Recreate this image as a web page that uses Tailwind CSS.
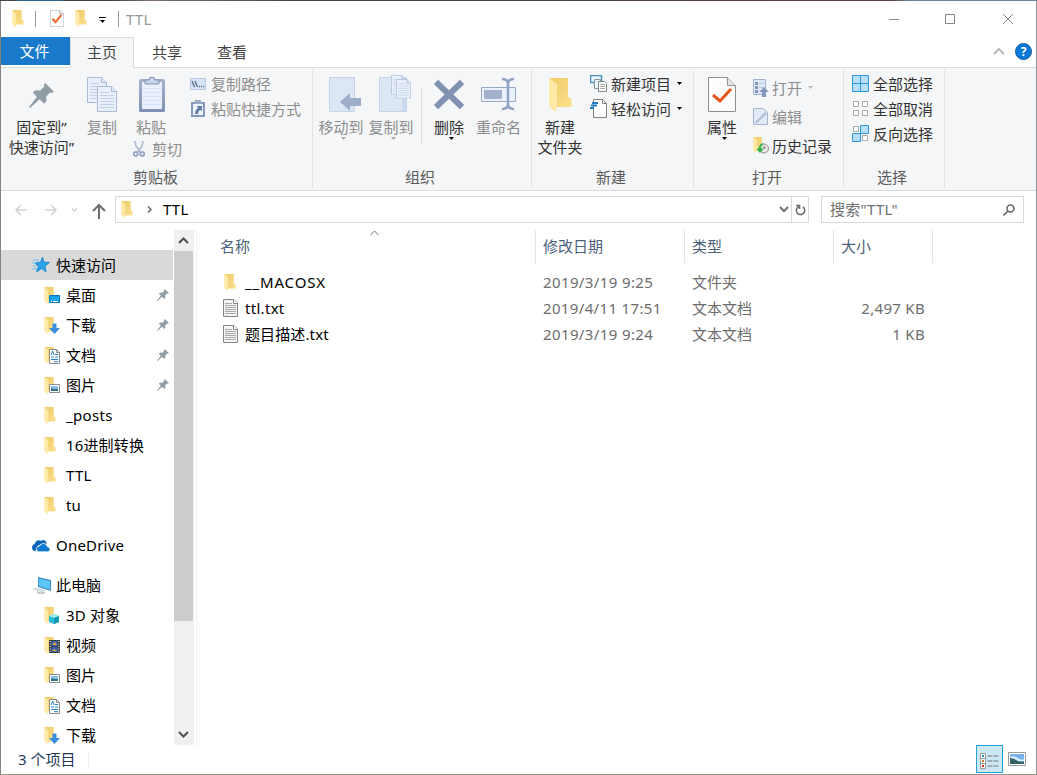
<!DOCTYPE html>
<html lang="zh-CN">
  <head>
    <meta charset="UTF-8" />
    <meta name="viewport" content="width=device-width, initial-scale=1.0" />
    <title>TTL</title>
    <script src="https://cdn.jsdelivr.net/npm/@tailwindcss/browser@4"></script>
  </head>
  <body class="font-['Noto_Sans','Noto_Sans_CJK_SC',sans-serif] text-[15px] leading-5 text-black">
    <!-- shared icons -->
    <svg class="absolute size-0">
      <linearGradient id="gold" x1="0" x2="1" y1="0" y2="1">
        <stop offset="0" stop-color="#f0cb66" />
        <stop offset="1" stop-color="#fbe08f" />
      </linearGradient>
      <linearGradient id="steel" x1="0" x2="0" y1="0" y2="1">
        <stop offset="0" stop-color="#a5b2cc" />
        <stop offset="1" stop-color="#7f90b3" />
      </linearGradient>
      <symbol id="folder" viewBox="0 0 23 34">
        <path d="M1 0h18v19l3.500 2v8H7z" fill="url(#gold)" />
        <path d="M0 0l8 6v23l-2 5-6-6z" fill="#ffe9a9" />
      </symbol>
      <symbol id="pin" viewBox="0 0 24 24">
        <path d="M15.500 0L24 8.500l-2.500 1-1.500-.3-3.500 4 .2 4.300-2.200 2.500-4.300-4.300L1 24l-1-1 7.500-9.500L3.700 9l2.500-2 4.600.3 3.700-3.600-.3-1.700z" />
      </symbol>
      <symbol id="page" viewBox="0 0 28 35">
        <path d="M.5.5h19l8 8v26H.5z" fill="#fdfdfd" stroke="#8f8f8f" />
        <path d="M19.500.5v8h8" fill="#e4e4e4" stroke="#8f8f8f" />
      </symbol>
      <symbol id="txt" viewBox="0 0 15 18">
        <path d="M.5.5h10.500l3.500 3.500v13.500H.5z" fill="#f6f6f6" stroke="#858585" />
        <path d="M10.500.5v4h4" fill="#fff" stroke="#858585" />
        <path d="M2 4.500h7M2 6.500h11M2 8.500h11M2 10.500h11M2 12.500h11M2 14.500h11" stroke="#a8a8a8" />
      </symbol>
      <symbol id="bluepage" viewBox="0 0 20 26">
        <path d="M.5.5h14l5 5v20H.5z" fill="#e9f0fb" stroke="#a9b9d6" />
        <path d="M14.500.5v5h5" fill="#dce6f5" stroke="#a9b9d6" />
        <path d="M3 6.500h9M3 9.500h14M3 12.500h14M3 15.500h14M3 18.500h14M3 21.500h14" stroke="#c3d0e6" />
      </symbol>
      <symbol id="picture" viewBox="0 0 11 9">
        <path d="M.5.5h10v8H.5z" fill="#fff" stroke="#8c8c8c" />
        <path d="M2 2h7v3H2z" fill="#86bbee" />
        <path d="M2 4l3 1 4 0v2H2z" fill="#33737d" />
      </symbol>
      <symbol id="down" viewBox="0 0 5 3"><path d="M0 0h5L2.500 3z" /></symbol>
      <symbol id="f-desktop" viewBox="0 0 17 17">
        <use href="#folder" width="12" height="17" />
        <path d="M5.500 8.500h10v7h-10z" fill="#18a2f2" stroke="#0878be" />
        <path d="M7 14.500h1M9 14.500h5" stroke="#fff" />
      </symbol>
      <symbol id="f-download" viewBox="0 0 17 17">
        <use href="#folder" width="12" height="17" />
        <path d="M8.500 6.500h4v4.500h3.500L10.500 17 5 11h3.500z" fill="#3b8ede" />
      </symbol>
      <symbol id="f-doc" viewBox="0 0 17 17">
        <use href="#folder" width="12" height="17" />
        <path d="M5.500 2.500h7l3 3v11h-10z" fill="#fff" stroke="#8b8b8b" />
        <path d="M12.500 2.500v3h3" fill="none" stroke="#8b8b8b" />
        <path d="M7 8l1.700-4 1.300 4M11 7.500h3M7 10h3M11 10h3M7 12.500h7M10 14.700h4" fill="none" stroke="#2b83c9" />
      </symbol>
      <symbol id="f-picture" viewBox="0 0 17 17">
        <use href="#folder" width="12" height="17" />
        <use href="#picture" x="5" y="7" width="11" height="9" />
      </symbol>
      <symbol id="f-3d" viewBox="0 0 17 17">
        <use href="#folder" width="12" height="17" />
        <path d="M5 9l5-2 5 2v6l-5 2-5-2z" fill="#27bcd4" />
        <path d="M5 9l5-2 5 2-5 2z" fill="#a7eaf3" />
        <path d="M10 11l5-2v6l-5 2z" fill="#1299b5" />
      </symbol>
      <symbol id="f-video" viewBox="0 0 17 17">
        <use href="#folder" width="12" height="17" />
        <path d="M5 3h11v13H5z" fill="#3c3c3c" />
        <path d="M7.500 4h6v5h-6zM7.500 10h6v5h-6z" fill="#3567b8" />
        <path d="M8 8l3-3 2 3zM8 14l2-2 3 2z" fill="#e7a13d" />
        <path d="M6.200 4v12M14.800 4v12" stroke="#fff" stroke-dasharray="1 1.500" />
      </symbol>
    </svg>

    <div class="h-[775px] w-[1037px] overflow-hidden bg-[linear-gradient(90deg,#47433f_0_15px,#2f648f_20px_60px,#3f413c_65px_110px,#80716a_150px,#3d4548_300px,#54423f_700px,#5b424a_890px,#6c8295_910px)] pt-px">
      <div class="flex h-[774px] flex-col border-r border-b border-l border-r-[#8d9396] border-b-[#99958b] border-l-[#87827a] bg-white">
        <!-- title bar -->
        <div class="flex h-9 shrink-0 items-center pb-px pl-[11px]">
          <svg class="h-[17px] w-3"><use href="#folder" /></svg>
          <div class="ml-[11px] h-4 w-px bg-[#999]"></div>
          <svg class="ml-[14px] h-[17px] w-[14px]" viewBox="0 0 28 35" preserveAspectRatio="none">
            <use href="#page" width="28" height="35" />
            <path d="M5 18l6 7 12-15" fill="none" stroke="#e8682e" stroke-width="4" />
          </svg>
          <svg class="ml-[11px] h-[17px] w-3"><use href="#folder" /></svg>
          <svg class="mt-[2px] ml-3 h-[6px] w-[7px]" viewBox="0 0 7 6"><path d="M0 0h7v1H0zM1 3h5L3.500 6z" /></svg>
          <div class="ml-3 h-4 w-px bg-[#999]"></div>
          <span class="ml-[7px] tracking-[.2px] text-[#999]">TTL</span>
          <svg class="mr-2 ml-auto h-3 w-[156px] fill-none stroke-[#888]" viewBox="0 0 156 12">
            <path d="M17 6.500h10M73.500 1.500h9v9h-9zM131 1l10 10M141 1l-10 10" />
          </svg>
        </div>

        <!-- tabs -->
        <div class="flex h-[31px] shrink-0 items-start border-b border-[#dadbdc] text-[#444]">
          <div class="h-7 w-[69px] bg-[#1979ca] pr-[2px] text-center leading-[29px] text-white">文件</div>
          <div class="h-[31px] w-[64px] border-x border-t border-[#dadbdc] bg-[#f5f6f7] text-center leading-[29px]">主页</div>
          <div class="w-[66px] text-center leading-[30px]">共享</div>
          <div class="w-[64px] text-center leading-[30px]">查看</div>
          <svg class="mt-[10px] ml-auto h-2 w-3 fill-none stroke-[#b5b5b5] stroke-[1.8]" viewBox="0 0 12 8"><path d="M1 7l5-5 5 5" /></svg>
          <div class="mt-[6px] mr-1 ml-[10px] size-[17px] rounded-full border border-[#15599b] bg-[#0779d8] text-center text-[12px] leading-[15px] font-bold text-white">?</div>
        </div>

        <!-- ribbon -->
        <div class="flex h-[123px] shrink-0 border-b border-[#dadbdc] bg-[#f5f6f7] pt-[2px] text-[#8d8d8d]">
          <div class="flex h-[118px] w-[312px] flex-col border-r border-[#e2e3e4]">
            <div class="flex h-[97px]">
              <div class="w-[82px] pt-[6px] pr-px text-center whitespace-nowrap text-[#333]">
                <div class="flex h-[41px] items-center justify-center pb-[3px]"><svg class="size-[25px] fill-[#919da5]"><use href="#pin" /></svg></div>
                <div>固定到”</div>
                <div>快速访问”</div>
              </div>
              <div class="w-[38px] pt-[6px] text-center">
                <svg class="mx-auto mb-[5px] h-9 w-[30px]" viewBox="0 0 30 36">
                  <use href="#bluepage" y="1" width="20" height="26" />
                  <use href="#bluepage" x="10" y="10" width="20" height="26" />
                </svg>
                <div>复制</div>
              </div>
              <div class="w-[62px] pt-[6px]">
                <svg class="mb-[5px] ml-[18px] h-9 w-[26px]" viewBox="0 0 26 36">
                  <rect y="3" width="26" height="33" rx="1.500" fill="url(#steel)" />
                  <path d="M3 6h20v27H3z" fill="#eaf1fc" />
                  <path d="M4 12.500h18M4 16.500h18M4 20.500h18M4 24.500h18M4 28.500h18" stroke="#d5e0f2" />
                  <path d="M6 8V4h4a3 3 0 0 1 6 0h4v4z" fill="#c6d2e5" stroke="#8192b2" />
                </svg>
                <div class="w-[60px] text-center">粘贴</div>
                <div class="mt-[2px] ml-[12px] flex items-center gap-[7px] whitespace-nowrap">
                  <svg class="h-[17px] w-3 shrink-0 fill-none stroke-[#91a2c2]" viewBox="0 0 12 17">
                    <path d="M2 0l1 5 5 7M10 0L9 5l-5 7" stroke-width="1.600" stroke="#aab9d2" />
                    <path d="M1 14a2 2 0 1 0 3.500-2A2 2 0 0 0 1 14zM11 14a2 2 0 1 1-3.500-2A2 2 0 0 1 11 14z" stroke-width="1.800" />
                  </svg>
                  <span>剪切</span>
                </div>
              </div>
              <div class="pt-px pl-[7px]">
                <div class="flex h-[25px] items-center gap-[5px]">
                  <svg class="h-3 w-4" viewBox="0 0 16 12">
                    <path d="M.5.5h15v11H.5z" fill="#d9e4f4" stroke="#b9c7e0" />
                    <path d="M2 3l2.500 6M5 3l2.500 6M9 8.500h1M11 8.500h1M13 8.500h1" stroke="#556b8e" stroke-width="1.300" />
                  </svg>
                  <span>复制路径</span>
                </div>
                <div class="flex h-[25px] items-center gap-[6px]">
                  <svg class="ml-[1px] h-[17px] w-[14px]" viewBox="0 0 14 17">
                    <path d="M0 2h14v15H0z" fill="#8698ba" />
                    <path d="M2 4h10v11H2z" fill="#edf3fc" />
                    <path d="M4 0h6v4H4z" fill="#9baac6" />
                    <path d="M5.500 6H11v5.500L9.300 9.800Q7 11 7 14H4q0-4 3.200-6.300z" fill="#637da9" />
                  </svg>
                  <span>粘贴快捷方式</span>
                </div>
              </div>
            </div>
            <div class="pr-[2px] text-center text-[#5a5a5a]">剪贴板</div>
          </div>

          <div class="flex h-[118px] w-[219px] flex-col border-r border-[#e2e3e4]">
            <div class="flex h-[97px] pl-[3px]">
              <div class="w-[50px] pt-[6px] text-center whitespace-nowrap">
                <svg class="mb-[5px] ml-[13px] h-9 w-8" viewBox="0 0 32 36">
                  <path d="M.5 1.500h25v34H.5z" fill="#dce6f5" stroke="#c6d3e8" />
                  <path d="M11 26l10-9v5h11v8H21v5z" fill="#9dadca" />
                </svg>
                <div class="-mx-2">移动到</div>
                <svg class="ml-[25px] h-[3px] w-[5px] fill-[#aaa]"><use href="#down" /></svg>
              </div>
              <div class="w-[55px] pt-[6px] whitespace-nowrap">
                <svg class="-mt-px mb-[5px] ml-[13px] h-[37px] w-8" viewBox="0 0 32 37">
                  <path d="M.5 2.500h27v34H.5z" fill="#dce6f5" stroke="#c6d3e8" />
                  <path d="M23 36V25l4-3v14z" fill="#cddaed" />
                  <use href="#bluepage" x="12" width="15" height="19.500" />
                  <use href="#bluepage" x="17" y="4" width="15" height="19.500" />
                </svg>
                <div class="w-[50px] text-center"><span class="-mx-2">复制到</span></div>
                <svg class="ml-[25px] h-[3px] w-[5px] fill-[#aaa]"><use href="#down" /></svg>
              </div>
              <div class="mt-[19px] h-[55px] w-px bg-[#dadcde]"></div>
              <div class="w-[54px] pt-[6px] text-center text-[#333]">
                <svg class="mx-auto mb-[5px] h-9 w-[30px]" viewBox="0 0 30 36">
                  <path d="M2 6l26 25M28 6L2 31" stroke="#8191b2" stroke-width="6" />
                </svg>
                <div>删除</div>
                <svg class="ml-[27px] h-[3px] w-[5px] fill-black"><use href="#down" /></svg>
              </div>
              <div class="w-[46px] pt-[6px] whitespace-nowrap">
                <svg class="mb-[5px] ml-[5px] h-9 w-[35px]" viewBox="0 0 35 36">
                  <path d="M.5 11.500h34v14H.5z" fill="#eaf1fd" stroke="#98a9c8" />
                  <path d="M3 14h18v9H3z" fill="#a2b0cb" />
                  <path d="M21 3q6 0 6 5v20q0 5-6 5M33 3q-6 0-6 5v20q0 5 6 5" fill="none" stroke="#91a2c2" stroke-width="2.500" />
                </svg>
                <div>重命名</div>
              </div>
            </div>
            <div class="pr-1 text-center text-[#5a5a5a]">组织</div>
          </div>

          <div class="flex h-[118px] w-[162px] flex-col border-r border-[#e2e3e4] text-[#333]">
            <div class="flex h-[97px]">
              <div class="w-[56px] pt-[6px] text-center">
                <svg class="mx-auto mt-[2px] mb-[5px] h-[34px] w-[23px]"><use href="#folder" /></svg>
                <div>新建</div>
                <div>文件夹</div>
              </div>
              <div class="pt-px pl-[2px]">
                <div class="flex h-[25px] items-center">
                  <svg class="h-[17px] w-[17px]" viewBox="0 0 17 17">
                    <path d="M.5.5h11v7H.5z" fill="#e9f6fd" stroke="#4a91b5" stroke-width="1.500" />
                    <path d="M4.500 4.500h6v9h-6z" fill="#eaf4fb" stroke="#8298a7" />
                    <path d="M8.500 6.500h6l2 2v8h-8z" fill="#fff" stroke="#858585" />
                    <path d="M10 9.500h5M10 11.500h5M10 13.500h5" stroke="#aaa" />
                  </svg>
                  <span class="ml-[4px]">新建项目</span>
                  <svg class="ml-[6px] h-[3px] w-[5px]"><use href="#down" /></svg>
                </div>
                <div class="flex h-[25px] items-center">
                  <svg class="h-[19px] w-[17px]" viewBox="0 0 17 19">
                    <path d="M3.500.5h9l4 4v14h-13z" fill="#fff" stroke="#808080" />
                    <path d="M12.500.5v4h4" fill="none" stroke="#808080" />
                    <path d="M2 4h6M1 6.500h6M0 9h4" stroke="#2680c0" stroke-width="1.800" />
                  </svg>
                  <span class="ml-[4px]">轻松访问</span>
                  <svg class="ml-[6px] h-[3px] w-[5px]"><use href="#down" /></svg>
                </div>
              </div>
            </div>
            <div class="pr-[3px] text-center text-[#5a5a5a]">新建</div>
          </div>

          <div class="flex h-[118px] w-[150px] flex-col border-r border-[#e2e3e4]">
            <div class="flex h-[97px]">
              <div class="w-[56px] pt-[6px] text-center text-[#333]">
                <svg class="mx-auto mb-[5px] h-9 w-[28px]" viewBox="0 0 28 36">
                  <use href="#page" y="1" width="28" height="35" />
                  <path d="M5 19l7 6 11-12" fill="none" stroke="#e8561c" stroke-width="3" />
                </svg>
                <div>属性</div>
                <svg class="ml-[28px] h-[3px] w-[5px] fill-black"><use href="#down" /></svg>
              </div>
              <div class="pt-[3px] pl-[3px]">
                <div class="flex h-[29px] items-center gap-[3px]">
                  <svg class="h-[18px] w-4" viewBox="0 0 16 18">
                    <path d="M.5.5h12v15H.5z" fill="#dfe8f6" stroke="#a4b4d0" />
                    <path d="M2 3h3v3H2zM2 7h3v3H2zM2 11h3v3H2z" fill="#8497ba" />
                    <path d="M6 4.500h5M6 8.500h5" stroke="#b6c4dc" />
                    <path d="M11 8l5 5h-3v5H9v-5H6z" fill="#8497ba" />
                  </svg>
                  <span>打开</span>
                  <svg class="ml-[3px] h-[3px] w-[5px] fill-[#bbb]"><use href="#down" /></svg>
                </div>
                <div class="flex h-[29px] items-center gap-[3px]">
                  <svg class="h-[17px] w-4" viewBox="0 0 16 17">
                    <path d="M.5.5h10l4 4v12H.5z" fill="#e3ebf8" stroke="#a4b4d0" />
                    <path d="M2 14L12 4l2 2L4 15H2z" fill="#b4c3dd" />
                  </svg>
                  <span>编辑</span>
                </div>
                <div class="flex h-[29px] items-center gap-[3px] text-[#333]">
                  <svg class="h-[17px] w-4" viewBox="0 0 16 17">
                    <use href="#folder" x="0" width="11" height="16" />
                    <circle cx="11" cy="11.500" r="4.500" fill="#e8e8e8" stroke="#8b8b8b" />
                    <path d="M11 9v3l2-2" fill="none" stroke="#777" />
                    <path d="M10 7q-4 1-3 6M4.500 11.500l2.500 3 2.500-3" fill="none" stroke="#30b347" stroke-width="2" />
                  </svg>
                  <span>历史记录</span>
                </div>
              </div>
            </div>
            <div class="pr-[3px] text-center text-[#5a5a5a]">打开</div>
          </div>

          <div class="flex h-[118px] w-[101px] flex-col border-r border-[#e2e3e4] text-[#333]">
            <div class="h-[97px] pt-px pl-2">
              <div class="flex h-[25px] items-center gap-[4px]">
                <svg class="size-[17px]" viewBox="0 0 17 17">
                  <path d="M.5.5h8v8h-8zM8.500.5h8v8h-8zM.5 8.500h8v8h-8zM8.500 8.500h8v8h-8z" fill="#b5dffb" stroke="#2f96dc" />
                </svg>
                <span>全部选择</span>
              </div>
              <div class="flex h-[25px] items-center gap-[4px]">
                <svg class="size-[17px]" viewBox="0 0 17 17">
                  <path d="M1.500 1.500h5v5h-5zM10.500 1.500h5v5h-5zM1.500 10.500h5v5h-5zM10.500 10.500h5v5h-5z" fill="#fff" stroke="#aaa" />
                </svg>
                <span>全部取消</span>
              </div>
              <div class="flex h-[25px] items-center gap-[4px]">
                <svg class="size-[17px]" viewBox="0 0 17 17">
                  <path d="M1.500 1.500h5v5h-5zM10.500 10.500h5v5h-5z" fill="#fff" stroke="#aaa" />
                  <path d="M8.500.5h8v8h-8zM.5 8.500h8v8h-8z" fill="#b5dffb" stroke="#2f96dc" />
                </svg>
                <span>反向选择</span>
              </div>
            </div>
            <div class="pr-1 text-center text-[#5a5a5a]">选择</div>
          </div>
        </div>

        <!-- address bar -->
        <div class="flex h-[39px] shrink-0 pt-[5px]">
          <svg class="h-[27px] w-[114px] fill-none" viewBox="0 0 114 27">
            <path d="M26 14H15M20 9l-5 5 5 5M44 14h11M50 9l5 5-5 5" stroke="#d2d2d2" stroke-width="1.500" />
            <path d="M71 12.500l2.500 2.500 2.500-2.500" stroke="#d2d2d2" stroke-width="1.500" />
            <path d="M98 23V9M92 15l6-6 6 6" stroke="#6d6d6d" stroke-width="2" />
          </svg>
          <div class="flex h-[27px] w-[694px] items-center border border-[#d9d9d9] pl-[5px]">
            <svg class="h-[17px] w-3"><use href="#folder" /></svg>
            <svg class="ml-[14px] h-[7px] w-[5px] fill-none stroke-[#666] stroke-[1.5]" viewBox="0 0 5 7"><path d="M1 .5l3 3-3 3" /></svg>
            <span class="mb-[2px] ml-[11px] tracking-[.2px]">TTL</span>
            <svg class="ml-auto h-[7px] w-[10px] fill-none stroke-[#707070] stroke-2" viewBox="0 0 10 7"><path d="M1 1l4 4 4-4" /></svg>
            <div class="ml-[2px] flex h-[25px] w-[17px] items-center justify-center border-l border-[#d9d9d9]">
              <svg class="h-3 w-[11px] fill-none stroke-[#707070] stroke-[1.6]" viewBox="0 0 11 12"><path d="M8 3a4.200 4.200 0 1 1-4.500-.3M1 1.500h3.500V5" /></svg>
            </div>
          </div>
          <div class="ml-3 flex h-[27px] w-[203px] items-center justify-between border border-[#d9d9d9] pr-2 pl-2 text-[#707070]">
            <span class="mb-[2px] tracking-[.3px]">搜索"TTL"</span>
            <svg class="size-3 fill-none stroke-[#666] stroke-[1.6]" viewBox="0 0 12 12"><circle cx="7.500" cy="4.500" r="3.500" /><path d="M5 7L.5 11.500" /></svg>
          </div>
        </div>

        <div class="flex h-[515px] shrink-0">
          <!-- navigation pane -->
          <div class="h-[515px] w-[173px] overflow-hidden pt-5">
            <div class="mr-[1px] flex h-[30px] items-center bg-[#d9d9d9] pl-[31px]">
              <svg class="h-[16px] w-[18px]" viewBox="0 0 18 16">
                <path d="M10.500 0l1.500 5 5.500.5-4.300 3.600L14 15l-4.300-3.500L4.500 15l2-5.700L3 6l5.500-.8z" fill="#27a3ec" stroke="#1683c8" stroke-width=".8" />
                <path d="M1 3h6M0 6h4M1 9h4M0 12h5" stroke="#6dc1f0" />
              </svg>
              <span class="ml-[6px]">快速访问</span>
            </div>
            <div class="flex h-[30px] items-center pr-[5px] pl-[43px]">
              <svg class="size-[17px]"><use href="#f-desktop" /></svg>
              <span class="ml-[5px]">桌面</span>
              <svg class="ml-auto size-3 fill-[#919da5]"><use href="#pin" /></svg>
            </div>
            <div class="flex h-[30px] items-center pr-[5px] pl-[43px]">
              <svg class="size-[17px]"><use href="#f-download" /></svg>
              <span class="ml-[5px]">下载</span>
              <svg class="ml-auto size-3 fill-[#919da5]"><use href="#pin" /></svg>
            </div>
            <div class="flex h-[30px] items-center pr-[5px] pl-[43px]">
              <svg class="size-[17px]"><use href="#f-doc" /></svg>
              <span class="ml-[5px]">文档</span>
              <svg class="ml-auto size-3 fill-[#919da5]"><use href="#pin" /></svg>
            </div>
            <div class="flex h-[30px] items-center pr-[5px] pl-[43px]">
              <svg class="size-[17px]"><use href="#f-picture" /></svg>
              <span class="ml-[5px]">图片</span>
              <svg class="ml-auto size-3 fill-[#919da5]"><use href="#pin" /></svg>
            </div>
            <div class="flex h-[30px] items-center pl-[43px]">
              <svg class="h-[17px] w-3"><use href="#folder" /></svg>
              <span class="ml-[10px] tracking-[.35px]">_posts</span>
            </div>
            <div class="flex h-[30px] items-center pl-[43px]">
              <svg class="h-[17px] w-3"><use href="#folder" /></svg>
              <span class="ml-[10px] tracking-[.15px]">16进制转换</span>
            </div>
            <div class="flex h-[30px] items-center pl-[43px]">
              <svg class="h-[17px] w-3"><use href="#folder" /></svg>
              <span class="ml-[10px] tracking-[.3px]">TTL</span>
            </div>
            <div class="flex h-[30px] items-center pl-[43px]">
              <svg class="h-[17px] w-3"><use href="#folder" /></svg>
              <span class="ml-[10px]">tu</span>
            </div>
            <div class="mt-[10px] flex h-[30px] items-center pl-[30px]">
              <svg class="h-[13px] w-[19px]" viewBox="0 0 18 12">
                <path d="M1 8q0-3 2.500-3.500Q4.500 1 7.500 1q1 0 2 .8Q11-.5 14 2l1 2.500-4-.5-4 2-3 5.500Q1 11 1 8z" fill="#0b65b9" />
                <path d="M5 9q.5-2.500 3-2.500Q9.500 4 12 4t3.500 3q2.500.5 2.500 2.800T15.500 12H7.500Q5 12 5 9z" fill="#0f79d0" stroke="#fff" stroke-width=".7" />
              </svg>
              <span class="ml-[6px] tracking-[.2px]">OneDrive</span>
            </div>
            <div class="mt-[10px] flex h-[30px] items-center pl-[31px]">
              <svg class="h-[17px] w-[20px]" viewBox="0 0 20 17">
                <path d="M6 0l13 3v11L6 10z" fill="#3c8dc5" />
                <path d="M7 1.500l11 2.500v8.500L7 9z" fill="#5dc5f8" />
                <path d="M0 12l4-1.500 10 3-4 2z" fill="#d5dade" />
                <path d="M5 15l3 1.500 5-1" fill="none" stroke="#b8bec4" stroke-width="1.500" />
              </svg>
              <span class="ml-[4px]">此电脑</span>
            </div>
            <div class="flex h-[30px] items-center pl-[43px]">
              <svg class="size-[17px]"><use href="#f-3d" /></svg>
              <span class="ml-[5px] tracking-[.2px]">3D 对象</span>
            </div>
            <div class="flex h-[30px] items-center pl-[43px]">
              <svg class="size-[17px]"><use href="#f-video" /></svg>
              <span class="ml-[5px]">视频</span>
            </div>
            <div class="flex h-[30px] items-center pl-[43px]">
              <svg class="size-[17px]"><use href="#f-picture" /></svg>
              <span class="ml-[5px]">图片</span>
            </div>
            <div class="flex h-[30px] items-center pl-[43px]">
              <svg class="size-[17px]"><use href="#f-doc" /></svg>
              <span class="ml-[5px]">文档</span>
            </div>
            <div class="flex h-[30px] items-center pl-[43px]">
              <svg class="size-[17px]"><use href="#f-download" /></svg>
              <span class="ml-[5px]">下载</span>
            </div>
          </div>
          <div class="flex w-5 flex-col items-start justify-between bg-[#f0f0f0]">
            <svg class="mt-[7px] ml-1 h-[7px] w-[11px] fill-none stroke-[#505050] stroke-2" viewBox="0 0 11 7"><path d="M1 6l4.500-4.500L10 6" /></svg>
            <div class="mt-[7px] h-[370px] w-[19px] bg-[#cdcdcd]"></div>
            <svg class="mt-auto mb-[7px] ml-1 h-[7px] w-[11px] fill-none stroke-[#505050] stroke-2" viewBox="0 0 11 7"><path d="M1 1l4.500 4.500L10 1" /></svg>
          </div>
          <div class="ml-[2px] w-px bg-[#f0f0f0]"></div>

          <!-- file list -->
          <div class="relative flex-1">
            <svg class="absolute top-0 left-[173px] h-[6px] w-[9px] fill-none stroke-[#707070]" viewBox="0 0 9 6"><path d="M.5 5l4-4 4 4" /></svg>
            <div class="grid h-[33px] grid-cols-[339px_149px_149px_99px] text-[#4c607a] leading-[32px]">
              <div class="border-r border-[#e5e5e5] pl-[23px]">名称</div>
              <div class="border-r border-[#e5e5e5] pl-[7px]">修改日期</div>
              <div class="border-r border-[#e5e5e5] pl-[7px]">类型</div>
              <div class="border-r border-[#e5e5e5] pl-[7px]">大小</div>
            </div>
            <div class="mt-[6px] text-[#6d6d6d]">
              <div class="grid h-[26px] grid-cols-[339px_149px_149px_91px] items-center">
                <div class="flex items-center pl-[27px] text-black"><svg class="h-[17px] w-3"><use href="#folder" /></svg><span class="ml-[9px] tracking-[.85px]">__MACOSX</span></div>
                <div class="pl-[7px] tracking-[.38px]">2019/3/19 9:25</div>
                <div class="pl-[7px]">文件夹</div>
                <div></div>
              </div>
              <div class="grid h-[26px] grid-cols-[339px_149px_149px_91px] items-center">
                <div class="flex items-center pl-[26px] text-black"><svg class="h-[18px] w-[15px]"><use href="#txt" /></svg><span class="ml-[7px] tracking-[.3px]">ttl.txt</span></div>
                <div class="pl-[7px] tracking-[.35px]">2019/4/11 17:51</div>
                <div class="pl-[7px]">文本文档</div>
                <div class="text-right tracking-[.3px]">2,497 KB</div>
              </div>
              <div class="grid h-[26px] grid-cols-[339px_149px_149px_91px] items-center">
                <div class="flex items-center pl-[26px] text-black"><svg class="h-[18px] w-[15px]"><use href="#txt" /></svg><span class="ml-[7px] tracking-[.12px]">题目描述.txt</span></div>
                <div class="pl-[7px] tracking-[.38px]">2019/3/19 9:24</div>
                <div class="pl-[7px]">文本文档</div>
                <div class="text-right tracking-[.3px]">1 KB</div>
              </div>
            </div>
          </div>
        </div>

        <!-- status bar -->
        <div class="flex h-[28px] shrink-0 items-center pl-[17px] text-[#1e395b]">
          <span class="mb-px w-[70px]">3 个项目</span>
          <div class="h-4 w-px bg-[#ededed]"></div>
          <div class="ml-auto flex h-[28px] w-[27px] items-center justify-center border border-[#26a0da] bg-[#cce8f6]">
            <svg class="mt-[3px] h-4 w-[19px]" viewBox="0 0 19 16">
              <path d="M.5.5h5v5h-5zM.5 5.500h5v5h-5zM.5 10.500h5v5h-5z" fill="#fff" stroke="#999" />
              <path d="M2 2h2v2H2z" fill="#288bc7" />
              <path d="M2 7h2v2H2z" fill="#c4782d" />
              <path d="M2 12h2v2H2z" fill="#d92d22" />
              <path d="M7.500 3h5M13.500 3h5M7.500 8h5M13.500 8h5M7.500 13h5M13.500 13h5" stroke="#777" />
            </svg>
          </div>
          <svg class="mr-[10px] ml-[5px] h-[14px] w-[18px]" viewBox="0 0 18 14">
            <path d="M.5.5h17v13H.5z" fill="#fff" stroke="#999" />
            <path d="M2 2h14v10H2z" fill="#78b1ec" />
            <path d="M2 5q4-2 8 1t6 1v2H2z" fill="#d5ebfb" />
            <path d="M2 6q4 0 7 2.500t7 1V12H2z" fill="#315f62" />
          </svg>
        </div>
      </div>
    </div>
  </body>
</html>
